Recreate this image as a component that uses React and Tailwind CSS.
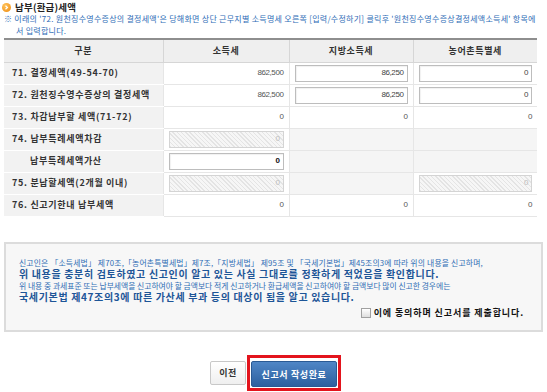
import React from 'react';

const rows = [
  { label: '71. 결정세액(49-54-70)', tax: { t: 'text', v: '862,500' }, local: { t: 'input', v: '86,250' }, farm: { t: 'input', v: '0' } },
  { label: '72. 원천징수영수증상의 결정세액', tax: { t: 'text', v: '862,500' }, local: { t: 'input', v: '86,250' }, farm: { t: 'input', v: '0' } },
  { label: '73. 차감납부할 세액(71-72)', tax: { t: 'text', v: '0' }, local: { t: 'text', v: '0' }, farm: { t: 'text', v: '0' } },
  { label: '74. 납부특례세액차감', tax: { t: 'disabled', v: '0' }, local: { t: 'empty' }, farm: { t: 'empty' } },
  { label: '납부특례세액가산', indent: true, tax: { t: 'input', v: '0', strong: true }, local: { t: 'empty' }, farm: { t: 'empty' } },
  { label: '75. 분납할세액(2개월 이내)', tax: { t: 'disabled', v: '0' }, local: { t: 'empty' }, farm: { t: 'disabled', v: '0' } },
  { label: '76. 신고기한내 납부세액', tax: { t: 'text', v: '0' }, local: { t: 'text', v: '0' }, farm: { t: 'text', v: '0' } },
];

const num = "font-['Liberation_Sans',sans-serif] text-[8px] tracking-[-0.4px]";

function Cell({ c }) {
  if (c.t === 'empty') {
    return <td className="h-[22px] bg-[#f5f5f5] border-b border-l border-[#e6e6e6]" />;
  }
  if (c.t === 'text') {
    return (
      <td className={`h-[22px] bg-white border-b border-l border-[#e6e6e6] text-right pr-[5px] text-[#555] ${num}`}>{c.v}</td>
    );
  }
  const disabled = c.t === 'disabled';
  return (
    <td className="h-[22px] bg-white border-b border-l border-[#e6e6e6] px-[5px]">
      <div
        className={`h-[17px] flex items-center justify-end pr-[3px] border ${
          disabled
            ? 'border-[#d4d4d4] bg-[repeating-linear-gradient(45deg,#e4e4e4_0px,#e4e4e4_1px,#f6f6f6_1px,#f6f6f6_3px)] text-[#bbb]'
            : 'border-[#bdbdbd] bg-white shadow-[inset_1px_1px_1px_rgba(0,0,0,0.06)] ' + (c.strong ? 'text-[#111] font-bold' : 'text-[#444]')
        } ${num}`}
      >
        {c.v}
      </div>
    </td>
  );
}

export default function App() {
  return (
    <div className="w-[547px] h-[392px] bg-white overflow-hidden font-['Noto_Sans_CJK_KR','Noto_Sans',sans-serif]">
      {/* Title */}
      <div className="flex items-center gap-[4px] pl-[2px] pt-[2px] h-[13px]">
        <span className="w-[9px] h-[9px] rounded-full bg-[radial-gradient(circle_at_35%_30%,#ffc35a,#ee8a12)] flex items-center justify-center">
          <svg width="5" height="5" viewBox="0 0 5 5"><path d="M1.5 0.8 L3.4 2.5 L1.5 4.2" fill="none" stroke="#fff" strokeWidth="1.2" /></svg>
        </span>
        <span className="text-[9.5px] font-bold text-[#222] leading-none tracking-[0.2px]">납부(환급)세액</span>
      </div>

      {/* Notice */}
      <p className="ml-[4px] w-[534px] h-[24px] pl-[12px] indent-[-12px] break-all text-[8px] tracking-[0.27px] leading-[12px] text-[#2e6cb6]">
        ※ 이래의 '72. 원천징수영수증상의 결정세액'은 당해화면 상단 근무지별 소득명세 오른쪽 [입력/수정하기] 클릭후 '원천징수영수증상결정세액소득세' 항목에서 입력합니다.
      </p>

      {/* Table */}
      <table className="ml-[4px] mt-[1px] w-[533px] table-fixed border-collapse border-t-2 border-[#8e8e8e]">
        <colgroup>
          <col className="w-[159px]" />
          <col className="w-[126px]" />
          <col className="w-[124px]" />
          <col className="w-[124px]" />
        </colgroup>
        <thead>
          <tr className="h-[23px] bg-[#efefef] text-[9px] font-bold text-[#333] tracking-[0.6px]">
            <th className="border-b border-[#d6d6d6]">구분</th>
            <th className="border-b border-l border-[#d6d6d6]">소득세</th>
            <th className="border-b border-l border-[#d6d6d6]">지방소득세</th>
            <th className="border-b border-l border-[#d6d6d6]">농어촌특별세</th>
          </tr>
        </thead>
        <tbody>
          {rows.map((r, i) => (
            <tr key={i}>
              <td className={`h-[22px] bg-[#f2f2f2] border-b border-white text-[9px] font-bold text-[#333] tracking-[0.7px] whitespace-nowrap ${r.indent ? 'pl-[26px]' : 'pl-[8px]'}`}>
                {r.label}
              </td>
              <Cell c={r.tax} />
              <Cell c={r.local} />
              <Cell c={r.farm} />
            </tr>
          ))}
        </tbody>
      </table>

      {/* Agreement box */}
      <div className="mx-[4px] mt-[25px] h-[90px] border-2 border-[#dcdcdc] bg-[#f7f7f7] pl-[13px] pr-[17px] pt-[13px] whitespace-nowrap">
        <div className="text-[7.8px] leading-[11px] text-[#2f6db5] tracking-[0.2px]">
          신고인은 「소득세법」 제70조,「농어촌특별세법」제7조,「지방세법」 제95조 및 「국세기본법」제45조의3에 따라 위의 내용을 신고하며,
        </div>
        <div className="text-[10px] leading-[12px] font-bold text-[#1d5597] tracking-[0.65px]">
          위 내용을 충분히 검토하였고 신고인이 알고 있는 사실 그대로를 정확하게 적었음을 확인합니다.
        </div>
        <div className="text-[7.8px] leading-[11px] text-[#2f6db5]">
          위 내용 중 과세표준 또는 납부세액을 신고하여야 할 금액보다 적게 신고하거나 환급세액을 신고하여야 할 금액보다 많이 신고한 경우에는
        </div>
        <div className="text-[10px] leading-[12px] font-bold text-[#1d5597] tracking-[0.65px]">
          국세기본법 제47조의3에 따른 가산세 부과 등의 대상이 됨을 알고 있습니다.
        </div>
        <label className="mt-[4px] flex items-center justify-end gap-[3px] text-[9px] font-bold text-[#111] leading-[12px] tracking-[0.9px]">
          <span className="w-[10px] h-[10px] border border-[#a0a0a0] bg-[linear-gradient(#fff,#dedede)]" />
          이에 동의하며 신고서를 제출합니다.
        </label>
      </div>

      {/* Buttons */}
      <div className="mt-[23px] flex items-center justify-center pl-[4px]">
        <button className="w-[36px] h-[24px] mr-[1px] rounded-[2px] border border-[#c8c8c8] bg-[linear-gradient(#ffffff,#efefef)] text-[9px] font-bold text-[#333] tracking-[0.5px]">
          이전
        </button>
        <div className="border-[3px] border-[#e3141d] p-[1px]">
          <button className="w-[86px] h-[26px] rounded-[2px] bg-[linear-gradient(#4f86c6,#2d609f)] border border-[#2a5a94] text-[9px] font-bold text-white tracking-[0.6px]">
            신고서 작성완료
          </button>
        </div>
      </div>
    </div>
  );
}
